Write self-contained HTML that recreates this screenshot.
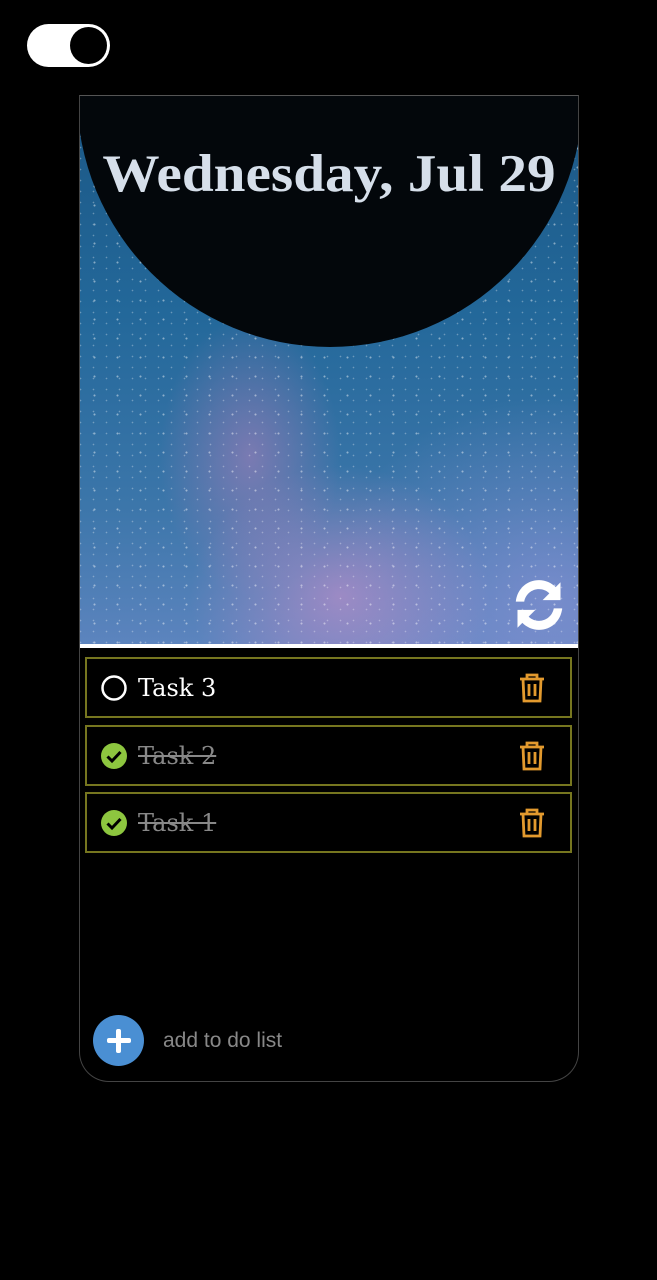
<!DOCTYPE html>
<html><head><style>
body{margin:0;width:657px;height:1280px;background:#000;position:relative;overflow:hidden;font-family:"Liberation Serif",serif}
.tog{position:absolute;left:27px;top:24px;width:83px;height:43px;border-radius:22px;background:#fff}
.tog:after{content:"";position:absolute;right:3px;top:3px;width:37px;height:37px;border-radius:50%;background:#000}
.card{position:absolute;left:79px;top:95px;width:498px;height:985px;border:1px solid #444;border-top-color:#555;border-radius:0 0 30px 30px;overflow:hidden}
.img{position:absolute;left:0;top:0;width:498px;height:548px;overflow:hidden;
background:
radial-gradient(ellipse 90px 140px at 170px 360px,rgba(190,130,190,.5),transparent),
radial-gradient(ellipse 150px 130px at 260px 500px,rgba(205,145,205,.6),transparent),
radial-gradient(ellipse 220px 200px at 470px 500px,rgba(150,150,220,.55),transparent),
linear-gradient(180deg,#1b5785 0%,#23689a 40%,#3c76aa 75%,#5c84be 100%)}
.stars{position:absolute;inset:0;background-image:radial-gradient(circle,#fff 0.8px,transparent 1.2px),radial-gradient(circle,rgba(255,255,255,.7) 0.6px,transparent 1px);background-size:23px 19px,13px 11px;background-position:3px 5px,7px 2px;opacity:.45}
.moon{position:absolute;left:-3px;top:-255px;width:506px;height:506px;border-radius:50%;background:#03070b}
.date{position:absolute;left:0;width:498px;top:48px;text-align:center;color:#d6dfea;font-weight:bold;font-size:53px;transform:scaleX(1.08);transform-origin:center;white-space:nowrap}
.line{position:absolute;left:0;top:548px;width:498px;height:4px;background:#fff}
.task{position:absolute;left:5px;width:483px;height:57px;border:2px solid #76761f;background:#000}
.task .t{position:absolute;left:51px;top:15px;color:#fff;font-family:"DejaVu Serif","Liberation Serif",serif;font-size:24px}
.task.d .t{color:#888;text-decoration:line-through}
.ic{position:absolute;left:13px;top:15px}
.tr{position:absolute;left:431px;top:14px}
.add{position:absolute;left:13px;top:919px;width:51px;height:51px;border-radius:50%;background:#4a8fd3}
.add:before{content:"";position:absolute;left:14px;top:23px;width:24px;height:5px;background:#fff;border-radius:2px}
.add:after{content:"";position:absolute;left:23px;top:14px;width:5px;height:24px;background:#fff;border-radius:2px}
.ph{position:absolute;left:83px;top:933px;color:#888;font-family:"Liberation Sans",sans-serif;font-size:21px}
</style></head><body>
<div class="tog"></div>
<div class="card">
<div class="img"><div class="stars"></div><div class="moon"></div><div class="date">Wednesday, Jul 29</div>
<svg style="position:absolute;left:432px;top:482px" width="54" height="54" viewBox="0 0 512 512"><path fill="#fff" d="M460 40v170H290l64-64c-26-26-60-40-98-40-70 0-128 50-140 118H36C50 100 144 20 256 20c62 0 118 26 158 66zM52 472V302h170l-64 64c26 26 60 40 98 40 70 0 128-50 140-118h80C462 412 368 492 256 492c-62 0-118-26-158-66z"/></svg>
</div>
<div class="line"></div>
<div class="task" style="top:561px"><svg class="ic" width="28" height="28"><circle cx="14" cy="14" r="11.5" fill="none" stroke="#fff" stroke-width="2.5"/></svg><span class="t">Task 3</span>
<svg class="tr" width="28" height="30" viewBox="0 0 28 30"><g fill="none" stroke="#e39a2e" stroke-width="2.8"><path d="M2 6h24M9 6V2h10v4M5 6l1 22h16l1-22M11 11v12M17 11v12"/></g></svg></div>
<div class="task d" style="top:629px"><svg class="ic" width="28" height="28"><circle cx="14" cy="14" r="13" fill="#8dc63f"/><path d="M7.5 14.5l4.5 4.5 8.5-9" stroke="#000" stroke-width="3" fill="none"/></svg><span class="t">Task 2</span>
<svg class="tr" width="28" height="30" viewBox="0 0 28 30"><g fill="none" stroke="#e39a2e" stroke-width="2.8"><path d="M2 6h24M9 6V2h10v4M5 6l1 22h16l1-22M11 11v12M17 11v12"/></g></svg></div>
<div class="task d" style="top:696px"><svg class="ic" width="28" height="28"><circle cx="14" cy="14" r="13" fill="#8dc63f"/><path d="M7.5 14.5l4.5 4.5 8.5-9" stroke="#000" stroke-width="3" fill="none"/></svg><span class="t">Task 1</span>
<svg class="tr" width="28" height="30" viewBox="0 0 28 30"><g fill="none" stroke="#e39a2e" stroke-width="2.8"><path d="M2 6h24M9 6V2h10v4M5 6l1 22h16l1-22M11 11v12M17 11v12"/></g></svg></div>
<div class="add"></div>
<div class="ph">add to do list</div>
</div>
</body></html>
